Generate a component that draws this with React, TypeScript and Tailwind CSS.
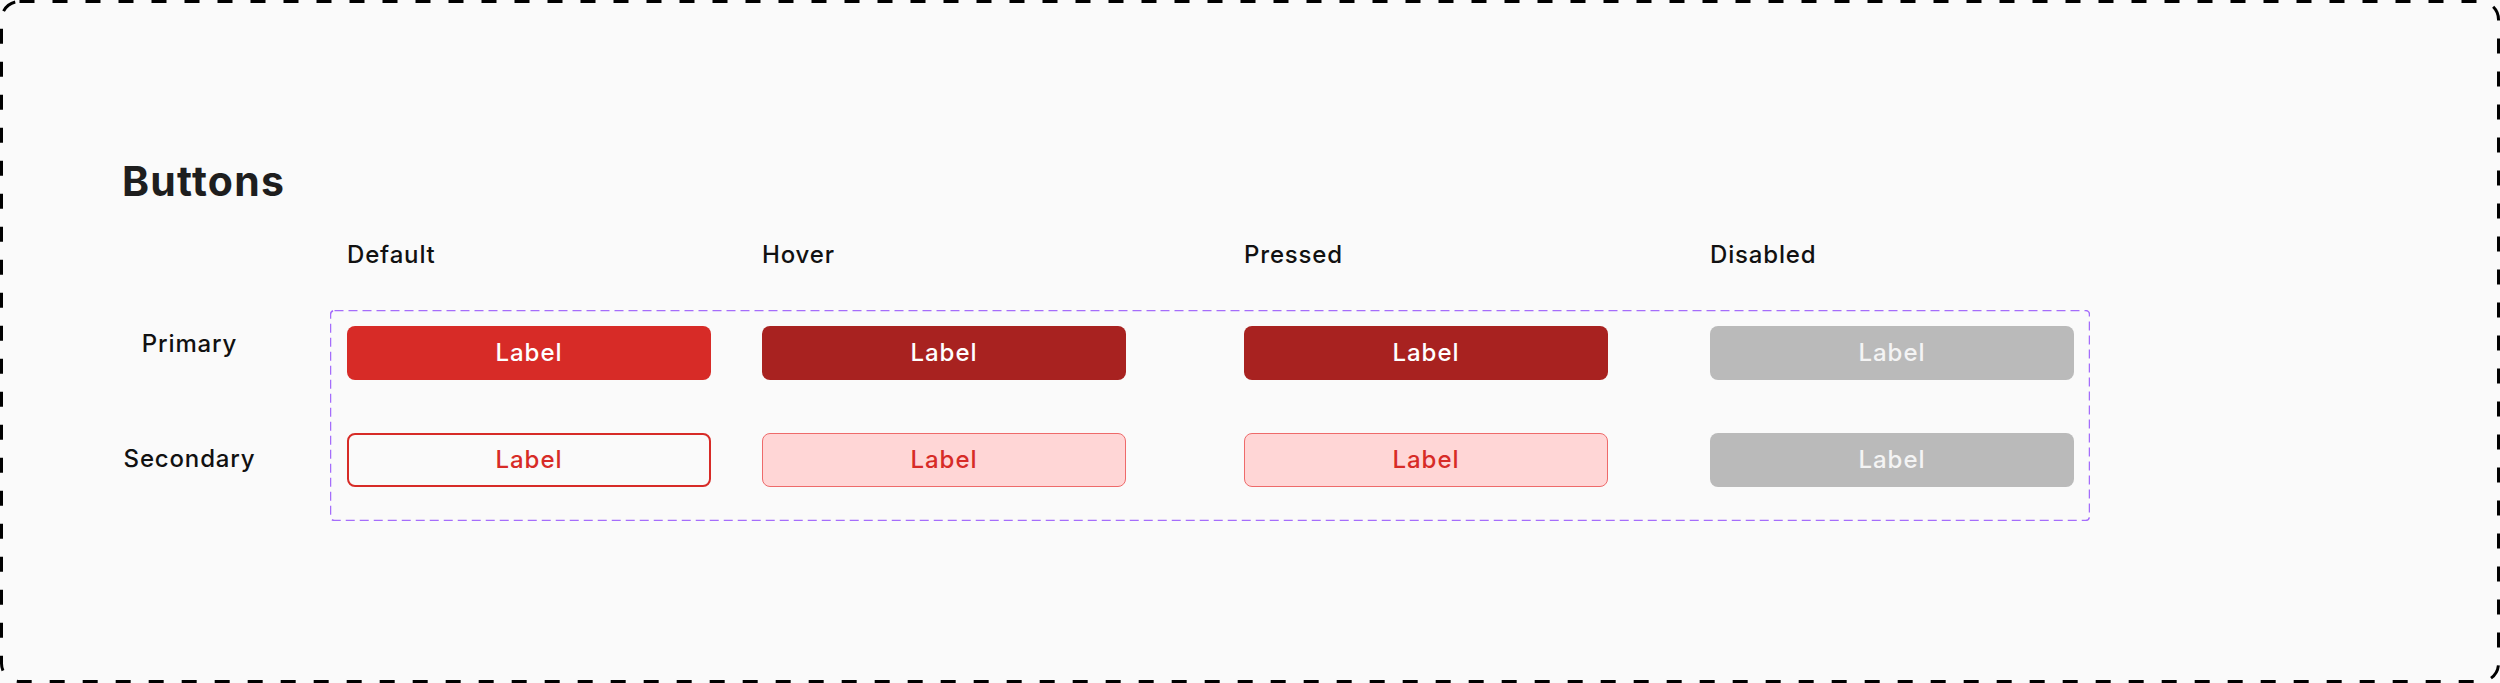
import React from "react";

type Variant = "primary" | "secondary";
type State = "default" | "hover" | "pressed" | "disabled";

const states: { key: State; title: string }[] = [
  { key: "default", title: "Default" },
  { key: "hover", title: "Hover" },
  { key: "pressed", title: "Pressed" },
  { key: "disabled", title: "Disabled" },
];

// every variant/state combo written out so tailwind picks them up
const styles: Record<Variant, Record<State, string>> = {
  primary: {
    default: "bg-[#d72b27] text-white",
    hover: "bg-[#a82220] text-white",
    pressed: "bg-[#a82220] text-white",
    disabled: "bg-[#bababa] text-[#f4f4f4]",
  },
  secondary: {
    default: "border-2 border-[#d72b27] text-[#d72b27]",
    hover: "bg-[#ffd6d6] border border-[#ee6a6a] text-[#d72b27]",
    pressed: "bg-[#ffd6d6] border border-[#ee6a6a] text-[#d72b27]",
    disabled: "bg-[#bababa] text-[#f4f4f4]",
  },
};

const DemoButton: React.FC<{ variant: Variant; state: State }> = ({ variant, state }) => (
  <button
    type="button"
    disabled={state === "disabled"}
    className={
      "w-[364px] h-[54px] rounded-[8px] flex items-center justify-center text-[24px] font-medium tracking-[0.04em] leading-none " +
      styles[variant][state]
    }
  >
    Label
  </button>
);

export default function App() {
  return (
    <div
      className="relative w-[2500px] h-[683px] bg-[#fafafa] text-[#111111] overflow-hidden"
      style={{ fontFamily: "Inter, 'Noto Sans', sans-serif" }}
    >
      {/* page frame */}
      <svg className="absolute inset-0 pointer-events-none" width="2500" height="683">
        <rect
          x="1.5"
          y="1.5"
          width="2497"
          height="680"
          rx="18"
          fill="none"
          stroke="#000"
          strokeWidth="3"
          strokeDasharray="15 18"
        />
      </svg>

      <div className="pl-[122px] pt-[161px]">
        <h1 className="text-[41px] font-bold leading-none tracking-[0.03em] text-[#1e1e1e]">Buttons</h1>

        {/* column headers */}
        <div className="mt-[41px] ml-[225px] grid grid-cols-[415px_482px_466px_364px]">
          {states.map((s) => (
            <div key={s.key} className="text-[24px] font-medium leading-none tracking-[0.035em]">
              {s.title}
            </div>
          ))}
        </div>

        <div className="mt-[43px] flex">
          {/* row labels */}
          <div className="w-[135px] pt-[22px] flex flex-col text-center text-[24px] font-medium leading-none tracking-[0.035em]">
            <span>Primary</span>
            <span className="mt-[91px]">Secondary</span>
          </div>

          {/* component set */}
          <div className="relative ml-[73px] w-[1760px] h-[211px] pt-[16px] pl-[17px]">
            <svg className="absolute inset-0 pointer-events-none" width="1760" height="211">
              <rect
                x="0.5"
                y="0.5"
                width="1759"
                height="210"
                rx="4"
                fill="none"
                stroke="#a56dfb"
                strokeWidth="1.5"
                strokeDasharray="9 5"
              />
            </svg>
            <div className="grid grid-cols-[415px_482px_466px_364px] gap-y-[53px]">
              {(["primary", "secondary"] as Variant[]).map((v) =>
                states.map((s) => <DemoButton key={v + s.key} variant={v} state={s.key} />)
              )}
            </div>
          </div>
        </div>
      </div>
    </div>
  );
}
